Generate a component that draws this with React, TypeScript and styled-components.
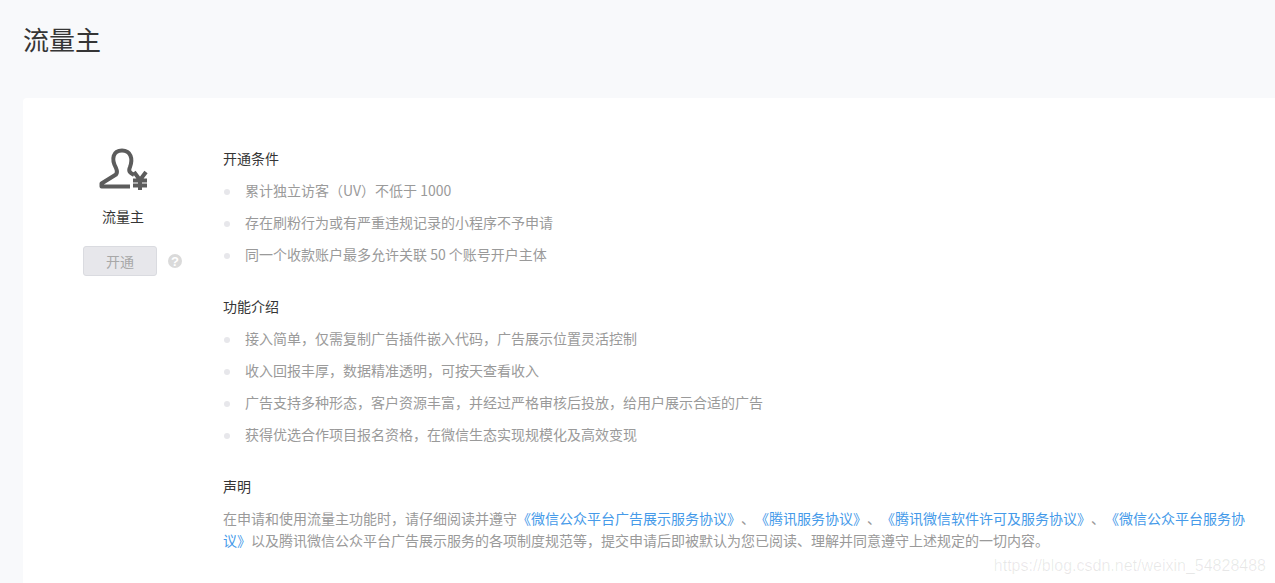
import React from 'react'
import styled, { createGlobalStyle } from 'styled-components'

const Global = createGlobalStyle`
  html, body {
    margin: 0;
    padding: 0;
    background: #f8f9fb;
    font-family: "Noto Sans CJK SC", "Liberation Sans", sans-serif;
  }
`

const conditions = [
  '累计独立访客（UV）不低于 1000',
  '存在刷粉行为或有严重违规记录的小程序不予申请',
  '同一个收款账户最多允许关联 50 个账号开户主体',
]

const features = [
  '接入简单，仅需复制广告插件嵌入代码，广告展示位置灵活控制',
  '收入回报丰厚，数据精准透明，可按天查看收入',
  '广告支持多种形态，客户资源丰富，并经过严格审核后投放，给用户展示合适的广告',
  '获得优选合作项目报名资格，在微信生态实现规模化及高效变现',
]

const UserYenIcon = () => (
  <svg width="52" height="46" viewBox="0 0 52 46" fill="none" stroke="#5c5c5c">
    <path
      strokeWidth="4"
      strokeLinejoin="round"
      d="M34 39.5H5.5V36.5L20 27.5Q22 25.5 20 21C15 12 17 3.5 26 3.5C35 3.5 37 12 34 20C32 24.5 34 26 38 28"
    />
    <path strokeWidth="4" d="M38 25L44 33L50 25M37 33.5H51M37 38.5H51M44 33V43" />
  </svg>
)

const App = () => {
  return (
    <Page>
      <Global />
      <Title>流量主</Title>
      <Card>
        <Side>
          <IconBox>
            <UserYenIcon />
          </IconBox>
          <Label>流量主</Label>
          <Actions>
            <OpenButton disabled>开通</OpenButton>
            <Help>?</Help>
          </Actions>
        </Side>
        <Main>
          <Section>
            <Heading>开通条件</Heading>
            <List>
              {conditions.map((text) => (
                <Item key={text}>{text}</Item>
              ))}
            </List>
          </Section>
          <Section>
            <Heading>功能介绍</Heading>
            <List>
              {features.map((text) => (
                <Item key={text}>{text}</Item>
              ))}
            </List>
          </Section>
          <Section>
            <Heading>声明</Heading>
            <Statement>
              在申请和使用流量主功能时，请仔细阅读并遵守
              <Link>《微信公众平台广告展示服务协议》</Link>
              <Sep>、</Sep>
              <Link>《腾讯服务协议》</Link>
              <Sep>、</Sep>
              <Link>《腾讯微信软件许可及服务协议》</Link>
              <Sep>、</Sep>
              <Link>《微信公众平台服务协议》</Link>
              以及腾讯微信公众平台广告展示服务的各项制度规范等，提交申请后即被默认为您已阅读、理解并同意遵守上述规定的一切内容。
            </Statement>
          </Section>
        </Main>
        <Watermark>https://blog.csdn.net/weixin_54828488</Watermark>
      </Card>
    </Page>
  )
}

export default App

const Page = styled.div`
  height: 583px;
  overflow: hidden;
  padding-left: 23px;
`

const Title = styled.h1`
  margin: 0;
  height: 98px;
  padding-top: 21px;
  box-sizing: border-box;
  font-size: 26px;
  line-height: 36px;
  font-weight: 400;
  color: #353535;
`

const Card = styled.div`
  position: relative;
  display: flex;
  min-height: 485px;
  box-sizing: border-box;
  padding: 49px 25px 0 60px;
  background: #fff;
  border-radius: 4px 0 0 0;
`

const Side = styled.div`
  display: flex;
  flex-direction: column;
  align-items: flex-start;
  flex: none;
  width: 140px;
`

const IconBox = styled.div`
  display: flex;
  justify-content: center;
  width: 78px;
  height: 46px;
`

const Label = styled.div`
  width: 80px;
  margin-top: 12px;
  text-align: center;
  font-size: 14px;
  line-height: 22px;
  color: #353535;
`

const Actions = styled.div`
  display: flex;
  align-items: center;
  gap: 11px;
  margin-top: 19px;
`

const OpenButton = styled.button`
  width: 74px;
  height: 30px;
  padding: 0;
  box-sizing: border-box;
  border: 1px solid #dadbe0;
  border-radius: 3px;
  background: #e7e7eb;
  color: #a8a8a8;
  font-family: inherit;
  font-size: 14px;
`

const Help = styled.span`
  display: flex;
  align-items: center;
  justify-content: center;
  width: 14px;
  height: 14px;
  border-radius: 50%;
  background: #dadada;
  color: #fff;
  font-family: "Liberation Sans", sans-serif;
  font-size: 13px;
  font-weight: 700;
`

const Main = styled.div`
  display: flex;
  flex-direction: column;
  gap: 25px;
  flex: 1;
  min-width: 0;
`

const Section = styled.section``

const Heading = styled.h3`
  margin: 0;
  font-size: 14px;
  line-height: 22px;
  font-weight: 400;
  color: #353535;
`

const List = styled.ul`
  margin: 5px 0 0;
  padding: 0;
  list-style: none;
`

const Item = styled.li`
  display: flex;
  align-items: center;
  gap: 15px;
  height: 32px;
  font-size: 14px;
  color: #9a9a9a;

  &::before {
    content: '';
    flex: none;
    width: 6px;
    height: 6px;
    margin: 4px 0 0 1px;
    border-radius: 50%;
    background: #e7e7eb;
  }
`

const Statement = styled.p`
  margin: 10px 0 0;
  font-size: 14px;
  line-height: 22px;
  color: #9a9a9a;
  text-spacing-trim: space-all;
`

const Link = styled.a`
  color: #459ae9;
`

const Sep = styled.span`
  letter-spacing: 0;
`

const Watermark = styled.div`
  position: absolute;
  right: 9px;
  top: 458px;
  font-family: "Liberation Sans", sans-serif;
  font-size: 16px;
  line-height: 20px;
  color: rgba(0, 0, 0, 0.09);
`
